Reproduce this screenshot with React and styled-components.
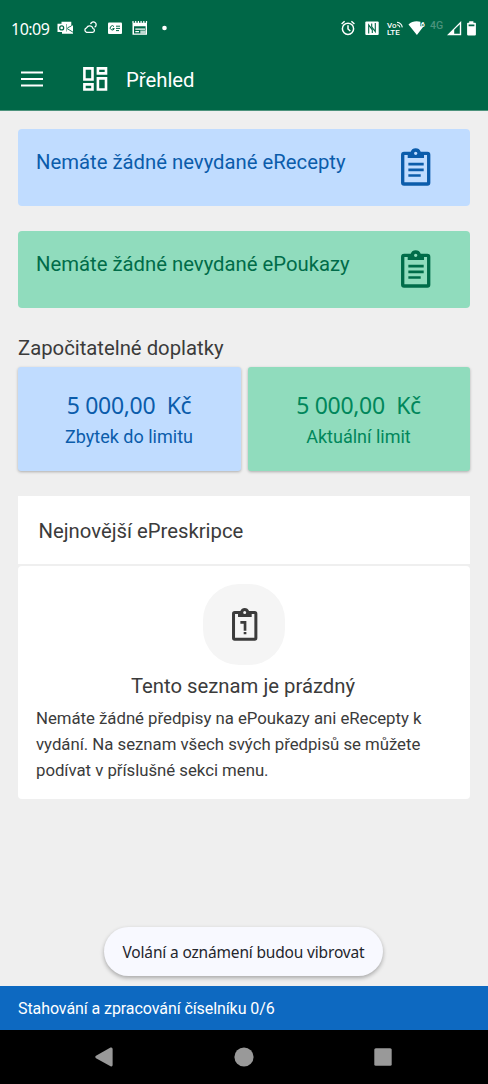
import React from 'react';
import styled, { createGlobalStyle } from 'styled-components';

const GlobalStyle = createGlobalStyle`
  * {
    box-sizing: border-box;
  }

  body {
    margin: 0;
    background: #efefef;
    font-family: Roboto, sans-serif;
  }

  svg {
    display: block;
    flex-shrink: 0;
  }
`;

const Screen = styled.div`
  width: 488px;
  height: 1084px;
  display: flex;
  flex-direction: column;
  overflow: hidden;
  color: #3b3b3b;
`;

const Header = styled.header`
  height: 111px;
  flex-shrink: 0;
  background: #006747;
  border-bottom: 1px solid #4c937c;
  color: #fff;
`;

const StatusBar = styled.div`
  height: 56px;
  padding: 0 10px 0 11px;
  display: flex;
  justify-content: space-between;
`;

const StatusGroup = styled.div`
  display: flex;
  align-items: center;
`;

const Clock = styled.span`
  width: 46px;
  padding-top: 1px;
  font-family: 'Noto Sans', sans-serif;
  font-size: 16px;
  letter-spacing: -0.5px;
  line-height: 20px;
`;

const AppBar = styled.div`
  height: 46px;
  padding-left: 21px;
  display: flex;
  align-items: center;
`;

const AppTitle = styled.h1`
  margin: 2px 0 0 18px;
  font-size: 20.3px;
  font-weight: 400;
  line-height: 24px;
`;

const DashboardSvg = styled.svg`
  margin-left: 40px;
`;

const Content = styled.main`
  flex: 1;
  padding: 18px 18px 0;
`;

const Notice = styled.section`
  height: 77px;
  margin-bottom: 25px;
  padding: 19px 39.5px 0 18px;
  display: flex;
  justify-content: space-between;
  border-radius: 4px;
  background: ${props => props.$bg};
  color: ${props => props.$color};
`;

const NoticeText = styled.p`
  margin: 2px 0 0;
  font-size: 20.3px;
  line-height: 25px;
  white-space: nowrap;
`;

const SectionTitle = styled.h2`
  margin: 0 0 6px;
  padding-top: 2px;
  font-size: 20.3px;
  font-weight: 400;
  line-height: 26px;
`;

const Tiles = styled.div`
  display: grid;
  grid-template-columns: 223px 222px;
  gap: 7px;
  margin-bottom: 25px;
`;

const Tile = styled.div`
  height: 104px;
  padding: 23px 1px 0 0;
  border-radius: 3px;
  text-align: center;
  background: ${props => props.$bg};
  color: ${props => props.$color};
  box-shadow: 0 1px 3px rgba(0, 0, 0, 0.28);
`;

const Amount = styled.div`
  font-family: 'Noto Sans', sans-serif;
  font-size: 23px;
  line-height: 30px;
  letter-spacing: -0.3px;
  white-space: pre;
`;

const TileLabel = styled.div`
  margin-top: 5px;
  font-size: 18px;
  line-height: 24px;
`;

const CardHeader = styled.div`
  height: 68px;
  padding: 22px 20.5px 0;
  background: #fff;
  font-size: 20.3px;
  line-height: 26px;
`;

const CardBody = styled.div`
  height: 233px;
  margin-top: 2px;
  padding: 18px 18px 0;
  display: flex;
  flex-direction: column;
  align-items: center;
  background: #fff;
  border-radius: 4px;
`;

const IconBubble = styled.div`
  width: 82px;
  height: 81px;
  flex-shrink: 0;
  padding-left: 2px;
  display: flex;
  align-items: center;
  justify-content: center;
  border-radius: 36px;
  background: #f5f5f5;
`;

const EmptyTitle = styled.h3`
  margin: 8px 0 6px -2px;
  font-size: 20.3px;
  font-weight: 400;
  line-height: 26px;
`;

const EmptyText = styled.p`
  margin: 0;
  align-self: stretch;
  font-size: 16.8px;
  line-height: 26.2px;
  letter-spacing: -0.03px;
  white-space: nowrap;
`;

const ToastRow = styled.div`
  height: 59px;
  padding-right: 1px;
  display: flex;
  justify-content: center;
  align-items: flex-start;
`;

const Toast = styled.div`
  width: 279px;
  height: 49px;
  border-radius: 25px;
  background: #f8f9ff;
  color: #24262c;
  font-family: 'Noto Sans', sans-serif;
  font-size: 15.5px;
  line-height: 50px;
  letter-spacing: -0.17px;
  text-align: center;
  white-space: nowrap;
  box-shadow: 0 2px 4px rgba(0, 0, 0, 0.3);
`;

const ProgressBar = styled.div`
  height: 44px;
  flex-shrink: 0;
  padding-left: 18px;
  background: #0d69c1;
  color: #fff;
  font-size: 16px;
  letter-spacing: -0.08px;
  line-height: 45px;
`;

const SystemNav = styled.nav`
  height: 54px;
  flex-shrink: 0;
  padding: 0 96px 0 95px;
  display: flex;
  align-items: center;
  justify-content: space-between;
  background: #000;
`;

const ClipboardIcon = () => (
  <svg width="29.4" height="38" viewBox="0 0 88 114" fill="currentColor">
    <path
      fillRule="evenodd"
      d="M9 11H29A16 16 0 0 1 59 11H79Q88 11 88 20V104Q88 113 79 113H9Q0 113 0 104V20Q0 11 9 11ZM10 21V103H78V21H69V30H20V21ZM44 11A5 5 0 1 0 44 21A5 5 0 1 0 44 11Z"
    />
    <path d="M22 44.5H68V52.5H22ZM22 61.5H68V69.5H22ZM22 78.5H59V86.5H22Z" />
  </svg>
);

const ClipboardOneIcon = () => (
  <svg width="25.4" height="33" viewBox="0 0 76 99" fill="#3b3b3b">
    <path
      fillRule="evenodd"
      d="M8 9H25A14 14 0 0 1 51 9H68Q76 9 76 17V90Q76 98 68 98H8Q0 98 0 90V17Q0 9 8 9ZM9 18V89H67V18H59V27H18V18ZM38 9A4.5 4.5 0 1 0 38 18A4.5 4.5 0 1 0 38 9Z"
    />
    <path d="M25 39H43V68H35V47H25ZM35 72H43V79H35Z" />
  </svg>
);

const NotificationIcons = () => (
  <svg width="114" height="20" viewBox="0 0 114 20" fill="#fff">
    {/* mail */}
    <path d="M4.5 3.7H14.3V8.2L16 7.3V15.8H5V13.5H9.5V6H4.5Z" />
    <path d="M10 10.5L16 14.2M10.5 9.8L14.3 8" fill="none" stroke="#006747" strokeWidth="0.9" />
    <path fillRule="evenodd" d="M0.5 5.8H9V14H0.5ZM4.7 7.2A2.6 2.7 0 1 0 4.7 12.6A2.6 2.7 0 1 0 4.7 7.2Z" />
    <circle cx="4.7" cy="9.9" r="1.3" />
    {/* weather */}
    <path
      d="M29.6 14.4H35.6A2.1 2.1 0 0 0 35.9 10.3A3.4 3.4 0 0 0 29.6 9.8A2.4 2.4 0 0 0 29.6 14.4ZM33.6 6.2A2.8 2.8 0 1 1 37.6 9.2"
      fill="none"
      stroke="#fff"
      strokeWidth="1.3"
    />
    {/* news */}
    <rect x="51" y="4.5" width="14" height="11.5" rx="1" />
    <path d="M57 8.6A2.1 2.1 0 1 0 57.3 10.6H55.5M59 8.2H63M59 10.4H63M59 12.6H62" fill="none" stroke="#006747" strokeWidth="1" />
    {/* calendar */}
    <path fillRule="evenodd" d="M75.5 4.8H90V16.8H75.5ZM77 8.2V15.6H88.6V8.2Z" />
    <path d="M76 3V5M78.7 3V5M81.4 3V5M84.1 3V5M86.8 3V5M89.5 3V5M78.3 11.1H88M78.3 13.6H82" stroke="#fff" strokeWidth="1.2" />
    <path d="M83.3 12.5H88.6V15.6H83.3Z" opacity=".75" />
    <circle cx="107.5" cy="10" r="2.3" />
  </svg>
);

const StatusIcons = () => (
  <svg width="137" height="20" viewBox="0 0 137 20" fill="#fff">
    {/* alarm */}
    <g fill="none" stroke="#fff" strokeWidth="1.5">
      <circle cx="7" cy="10.8" r="5.6" />
      <path d="M7 7.3V11L9.3 13M0.6 6L3.6 3.3M10.4 3.3L13.4 6" />
    </g>
    {/* nfc */}
    <rect x="24.3" y="3.6" width="13.4" height="13.4" rx="1" />
    <path d="M27.7 15.6V7L31.3 11.8V15M34.3 5V13.6L30.7 8.8V5.6" fill="none" stroke="#006747" strokeWidth="1.1" />
    {/* volte */}
    <text x="46" y="9.5" fontFamily="Roboto, sans-serif" fontSize="8" fontWeight="500">Vo</text>
    <text x="46" y="17" fontFamily="Roboto, sans-serif" fontSize="8" fontWeight="500">LTE</text>
    <path d="M56 4.2Q60.5 4.8 61.3 9.3M56 6.8Q58.3 7 59 9.3" fill="none" stroke="#fff" strokeWidth="1.1" />
    {/* wifi */}
    <path d="M67.5 6.6C70.6 3.1 75.8 2.6 79.4 3.8V8.3H82.6L75.9 17Z" />
    <text x="79.8" y="8.7" fontFamily="Roboto, sans-serif" fontSize="7" fontWeight="700">6</text>
    <text x="89" y="10.7" fontFamily="Roboto, sans-serif" fontSize="10.5" fontWeight="500" fill="#4b937d">4G</text>
    {/* signal */}
    <path fillRule="evenodd" d="M106 17.2L120.2 3V17.2ZM113.2 11.8V15.8H118.8V6.2Z" />
    {/* battery */}
    <path fillRule="evenodd" d="M128.2 3.2H132.4V4.8H134.2Q134.9 4.8 134.9 5.5V16.6Q134.9 17.4 134.2 17.4H126.9Q126.1 17.4 126.1 16.6V5.5Q126.1 4.8 126.9 4.8H128.2ZM127.6 6.4V8.2H133.4V6.4Z" />
  </svg>
);

const App = () => {
  return (
    <>
      <GlobalStyle />
      <Screen>
        <Header>
          <StatusBar>
            <StatusGroup>
              <Clock>10:09</Clock>
              <NotificationIcons />
            </StatusGroup>
            <StatusGroup>
              <StatusIcons />
            </StatusGroup>
          </StatusBar>
          <AppBar>
            <svg width="22" height="16" viewBox="0 0 22 16" stroke="#fff" strokeWidth="2">
              <path d="M0 1.5H22M0 8H22M0 14.5H22" />
            </svg>
            <DashboardSvg width="25" height="24" viewBox="0 0 25 24" fill="none" stroke="#fff" strokeWidth="2.6">
              <path d="M1.4 1.4H9.5V12.5H1.4ZM14.9 1.4H23V6.4H14.9ZM1.4 17.4H9.5V22.5H1.4ZM14.9 11.4H23V22.5H14.9Z" />
            </DashboardSvg>
            <AppTitle>Přehled</AppTitle>
          </AppBar>
        </Header>

        <Content>
          <Notice $bg="#c0dcff" $color="#0b5cab">
            <NoticeText>Nemáte žádné nevydané eRecepty</NoticeText>
            <ClipboardIcon />
          </Notice>
          <Notice $bg="#90dcbd" $color="#006c49">
            <NoticeText>Nemáte žádné nevydané ePoukazy</NoticeText>
            <ClipboardIcon />
          </Notice>

          <SectionTitle>Započitatelné doplatky</SectionTitle>
          <Tiles>
            <Tile $bg="#c0dcff" $color="#0b5cab">
              <Amount>{'5 000,00  Kč'}</Amount>
              <TileLabel>Zbytek do limitu</TileLabel>
            </Tile>
            <Tile $bg="#90dcbd" $color="#00875b">
              <Amount>{'5 000,00  Kč'}</Amount>
              <TileLabel>Aktuální limit</TileLabel>
            </Tile>
          </Tiles>

          <CardHeader>Nejnovější ePreskripce</CardHeader>
          <CardBody>
            <IconBubble>
              <ClipboardOneIcon />
            </IconBubble>
            <EmptyTitle>Tento seznam je prázdný</EmptyTitle>
            <EmptyText>
              Nemáte žádné předpisy na ePoukazy ani eRecepty k<br />
              vydání. Na seznam všech svých předpisů se můžete<br />
              podívat v příslušné sekci menu.
            </EmptyText>
          </CardBody>
        </Content>

        <ToastRow>
          <Toast>Volání a oznámení budou vibrovat</Toast>
        </ToastRow>
        <ProgressBar>Stahování a zpracování číselníku 0/6</ProgressBar>
        <SystemNav>
          <svg width="18" height="20" viewBox="0 0 18 20" fill="#999">
            <path d="M1 8.8L15.5 0.6Q17.6 0 17.6 2V18Q17.6 20 15.5 19.2L1 11.2Q-.5 10 1 8.8Z" />
          </svg>
          <svg width="20" height="20" viewBox="0 0 20 20" fill="#999">
            <circle cx="10" cy="10" r="9.6" />
          </svg>
          <svg width="18" height="18" viewBox="0 0 18 18" fill="#999">
            <rect x="0.3" y="0.3" width="17.4" height="17.4" rx="1.5" />
          </svg>
        </SystemNav>
      </Screen>
    </>
  );
};

export default App;
